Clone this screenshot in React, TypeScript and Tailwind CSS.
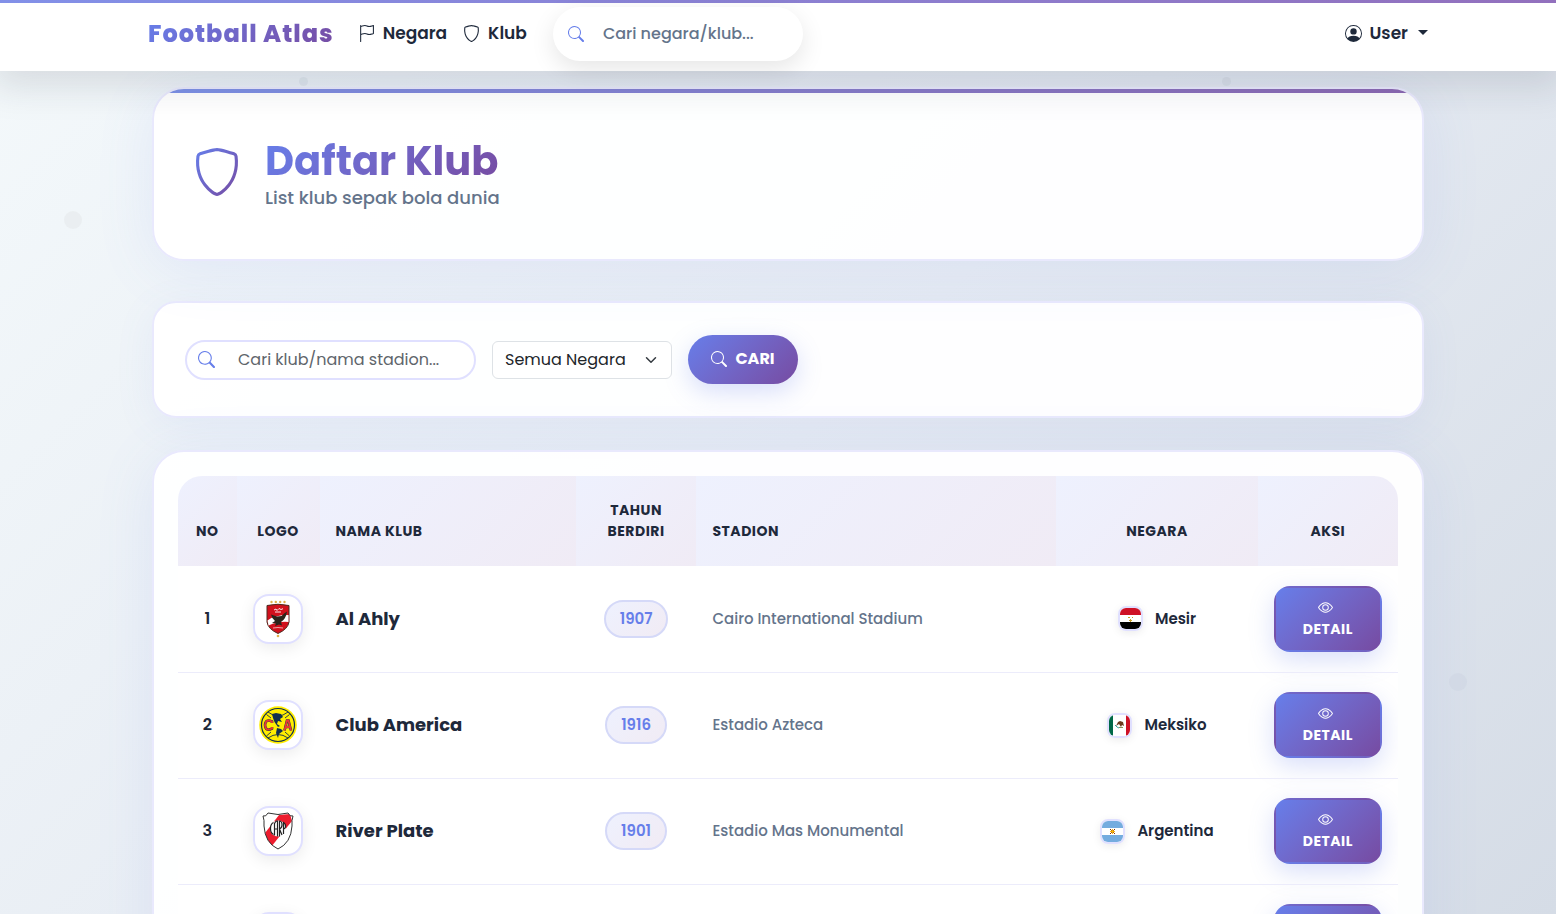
import React from "react";
import { BsEye, BsFlag, BsPersonCircle, BsSearch, BsShield } from "react-icons/bs";

type Club = {
  name: string;
  year: string;
  stadium: string;
  country: string;
  crest: React.ReactNode;
  flag: React.ReactNode;
};

function AlAhlyCrest() {
  return (
    <svg viewBox="0 0 38 38" className="size-full" aria-hidden="true">
      <g fill="#e0b04a">
        <circle cx="12.5" cy="2" r="1.2" />
        <circle cx="16.8" cy="2" r="1.2" />
        <circle cx="21.2" cy="2" r="1.2" />
        <circle cx="25.5" cy="2" r="1.2" />
        <circle cx="19" cy="36" r="1.3" />
      </g>
      <path d="M8 5.5 Q19 3 30 5.5 V22 Q29 29 19 33.5 Q9 29 8 22 Z" fill="#d1101c" stroke="#4b2b20" strokeWidth="1" />
      <path d="M8.5 20.5 Q15 15 29.5 15 V22 Q20 21 9.5 25.5 Z" fill="#fff" />
      <path d="M15 10 l2-1 1 1.5 2-2 2 1 2-.8 M16 12 h6" fill="none" stroke="#fff" strokeWidth=".9" />
      <path d="M28 11.5 Q25 13 22.5 16 L18 16.5 L12 14.5 Q13 19 16 21 L13 23 L17 23.5 L16 26 L20 24.5 L23 25.5 L22 22 Q27 19 28 11.5 Z" fill="#2c241b" />
      <path d="M14 28 Q19 27 24 28" fill="none" stroke="#f3c8c8" strokeWidth=".8" />
    </svg>
  );
}

function AmericaCrest() {
  return (
    <svg viewBox="0 0 38 38" className="size-full" aria-hidden="true">
      <circle cx="19" cy="19" r="18.8" fill="#ffed00" />
      <circle cx="19" cy="19" r="16.5" fill="none" stroke="#12304f" strokeWidth="1.2" />
      <path d="M9 6 Q19 14 29 6 M9 32 Q19 25 29 32 M12 12 L7.5 8.5 M26 12 L30.5 8.5 M12 26 L7.5 30 M26 26 L30.5 30" fill="none" stroke="#12304f" strokeWidth=".9" />
      <path d="M13 8 L17 7 L22 8 L24 11 L21 13 L23 16 L19 15 L18 18 L21 20 L19 21 L15.5 16 L14 12 Z M18 22 L22 23 L24 25 L20 28 L19 32 L17 27 Z" fill="#12304f" />
      <path d="M13 17 V15.5 Q6.5 12.5 6 19 Q6.5 26 13 22.5 V21" fill="none" stroke="#12304f" strokeWidth="2.6" />
      <path d="M13 17 V15.5 Q6.5 12.5 6 19 Q6.5 26 13 22.5 V21" fill="none" stroke="#e63b35" strokeWidth="1.9" />
      <path d="M25.5 24.5 L28 14.5 H29.5 L32 24.5 M26.5 21 H31" fill="none" stroke="#12304f" strokeWidth="2.6" />
      <path d="M25.5 24.5 L28 14.5 H29.5 L32 24.5 M26.5 21 H31" fill="none" stroke="#e63b35" strokeWidth="1.9" />
    </svg>
  );
}

function RiverCrest() {
  return (
    <svg viewBox="0 0 38 38" className="size-full" aria-hidden="true">
      <defs>
        <clipPath id="river-shield">
          <path d="M4 4 Q7 5 9 1 Q19 4 29 1 Q31 5 34 4 Q32.5 8 33 14 Q32 31 19 37 Q6 31 5 14 Q5.5 8 4 4 Z" />
        </clipPath>
      </defs>
      <g clipPath="url(#river-shield)">
        <rect width="38" height="38" fill="#fff" />
        <path d="M20 3 L31 2 L33 9 L12 35 L9 31 L6 21 Z" fill="#ed1c2e" />
      </g>
      <path d="M4 4 Q7 5 9 1 Q19 4 29 1 Q31 5 34 4 Q32.5 8 33 14 Q32 31 19 37 Q6 31 5 14 Q5.5 8 4 4 Z" fill="none" stroke="#333" strokeWidth="1" />
      <circle cx="19" cy="16.5" r="8" fill="#fff" />
      <path d="M14.5 10.5 Q11.5 12 11.5 16.5 Q11.5 21 14.5 22.5 M15.5 23.5 V11.5 Q17 8.5 18.5 9 V24.5 M15.5 17 H18.5 M20.5 24.5 V9 Q23 9 23 13 Q23 16 20.5 17 L23 23 M24.5 22 V10.5 Q27 12 26.5 15 Q26 17 24.5 17" fill="none" stroke="#222" strokeWidth="1.2" />
    </svg>
  );
}

function EgyptFlag() {
  return (
    <svg viewBox="0 0 21 21" className="size-full" aria-hidden="true">
      <rect width="21" height="21" fill="#fff" />
      <rect width="21" height="7" fill="#ce1126" />
      <rect y="14" width="21" height="7" fill="#000" />
      <path d="M8 9h2v1h-2z M12 9h1v1h-1z M10 11h1v1h1v1h-1v1h-1v-1h-1v-1h1z" fill="#c9a227" />
    </svg>
  );
}

function MexicoFlag() {
  return (
    <svg viewBox="0 0 21 21" className="size-full" aria-hidden="true">
      <rect width="21" height="21" fill="#fff" />
      <rect width="4" height="21" fill="#006847" />
      <rect x="17" width="4" height="21" fill="#ce1126" />
      <path d="M9 7 L11 6 L14 7 L15 11 L13 10 L12 12 L10 9 L7 11 Z" fill="#6b3a1e" />
      <path d="M6 10 L8 12 L10 13" fill="none" stroke="#3aa6a0" strokeWidth="1" />
      <path d="M10 12.5 L14 12.5" stroke="#8c9157" strokeWidth="1" />
    </svg>
  );
}

function ArgentinaFlag() {
  return (
    <svg viewBox="0 0 21 21" className="size-full" aria-hidden="true">
      <rect width="21" height="21" fill="#fff" />
      <rect width="21" height="7" fill="#74acdf" />
      <rect y="14" width="21" height="7" fill="#74acdf" />
      <path d="M8 8 L13 13 M13 8 L8 13" stroke="#85340a" strokeWidth="1" />
      <path d="M10.5 8 V13 M8 10.5 H13" stroke="#f6b40e" strokeWidth="1" />
      <circle cx="10.5" cy="10.5" r="1.4" fill="#f6b40e" />
    </svg>
  );
}

const clubs: Club[] = [
  { name: "Al Ahly", year: "1907", stadium: "Cairo International Stadium", country: "Mesir", crest: <AlAhlyCrest />, flag: <EgyptFlag /> },
  { name: "Club America", year: "1916", stadium: "Estadio Azteca", country: "Meksiko", crest: <AmericaCrest />, flag: <MexicoFlag /> },
  { name: "River Plate", year: "1901", stadium: "Estadio Mas Monumental", country: "Argentina", crest: <RiverCrest />, flag: <ArgentinaFlag /> },
  { name: "", year: "", stadium: "", country: "", crest: null, flag: null },
];

const th = "bg-[linear-gradient(135deg,#eef1fe,#f0ebf5)] px-4 py-6 align-bottom text-sm leading-[21px] font-bold tracking-[0.5px] uppercase";
const card = "border-2 border-[#e9e9fd] bg-white/95";
const wideShadow = "shadow-[0_8px_60px_rgba(102,126,234,0.11)]";

function Navbar() {
  return (
    <header className="relative z-10 bg-white/98 shadow-[0_8px_36px_8px_rgba(31,41,55,0.13)]">
      <div className="h-[3px] bg-linear-to-r from-[#8290e8] to-[#9270bd]" />
      <div className="pl-5">
        <nav className="mx-auto flex h-17 max-w-[1280px] items-center pb-1.5">
          <a href="#" className="mr-6 bg-linear-135 from-[#667eea] to-[#764ba2] bg-clip-text text-2xl leading-9 font-extrabold tracking-[1px] text-transparent">
            Football Atlas
          </a>
          <a href="#negara" className="mr-4 flex items-center gap-2 text-[17px] font-semibold">
            <BsFlag className="mb-0.5 size-[17px]" />
            Negara
          </a>
          <a href="#klub" className="mr-[26px] flex items-center gap-2 text-[17px] font-semibold">
            <BsShield className="mb-0.5 size-[17px]" />
            Klub
          </a>
          <label className="flex h-[54px] w-[250px] items-center rounded-full bg-white pr-4 pl-[15px] shadow-[0_8px_24px_rgba(0,0,0,0.1)]">
            <BsSearch className="size-4 shrink-0 text-[#667eea]" />
            <input
              type="search"
              aria-label="Cari negara/klub"
              placeholder="Cari negara/klub..."
              className="ml-[19px] w-full min-w-0 text-base font-medium outline-none placeholder:text-[#64748b]"
            />
          </label>
          <button type="button" className="ml-auto flex items-center gap-2 text-[17px] font-semibold">
            <BsPersonCircle className="mb-0.5 size-[17px]" />
            User
            <span className="mb-1 ml-0.5 border-x-[5px] border-t-[5px] border-x-transparent border-t-[#1e293b]" />
          </button>
        </nav>
      </div>
    </header>
  );
}

function PageHeader() {
  return (
    <section className={`relative flex h-[174px] items-center overflow-hidden rounded-[32px] px-[39px] ${card} ${wideShadow}`}>
      <div className="absolute inset-x-0 top-0 h-1 bg-linear-to-r from-[#7d92e8] to-[#8c68b3]" />
      <svg viewBox="0 0 16 16" className="mr-6 mb-1 size-12" aria-hidden="true">
        <defs>
          <linearGradient id="shield-tone" x1="0" y1="0" x2="1" y2="1">
            <stop offset="0" stopColor="#667eea" />
            <stop offset="1" stopColor="#764ba2" />
          </linearGradient>
        </defs>
        <path
          fill="url(#shield-tone)"
          d="M5.338 1.59a61 61 0 0 0-2.837.856.48.48 0 0 0-.328.39c-.554 4.157.726 7.19 2.253 9.188a10.7 10.7 0 0 0 2.287 2.233c.346.244.652.42.893.533q.18.085.293.118a1 1 0 0 0 .101.025 1 1 0 0 0 .1-.025q.114-.034.294-.118c.24-.113.547-.29.893-.533a10.7 10.7 0 0 0 2.287-2.233c1.527-1.997 2.807-5.031 2.253-9.188a.48.48 0 0 0-.328-.39c-.651-.213-1.75-.56-2.837-.855C9.552 1.29 8.531 1.067 8 1.067c-.53 0-1.552.223-2.662.524zM5.072.56C6.157.265 7.31 0 8 0s1.843.265 2.928.56c1.11.3 2.229.655 2.887.87a1.54 1.54 0 0 1 1.044 1.262c.596 4.477-.787 7.795-2.465 9.99a11.8 11.8 0 0 1-2.517 2.453 7 7 0 0 1-1.048.625c-.28.132-.581.24-.829.24s-.548-.108-.829-.24a7 7 0 0 1-1.048-.625 11.8 11.8 0 0 1-2.517-2.453C1.928 10.487.545 7.169 1.141 2.692A1.54 1.54 0 0 1 2.185 1.43 63 63 0 0 1 5.072.56"
        />
      </svg>
      <div>
        <h1 className="w-fit bg-linear-135 from-[#667eea] to-[#764ba2] bg-clip-text text-[40px] leading-12 font-bold text-transparent">
          Daftar Klub
        </h1>
        <p className="text-lg leading-[26px] font-medium text-[#64748b]">List klub sepak bola dunia</p>
      </div>
    </section>
  );
}

function Filters() {
  return (
    <form
      onSubmit={(event) => event.preventDefault()}
      className={`mt-10 flex h-[117px] items-center gap-4 rounded-3xl px-[31px] shadow-[0_8px_40px_rgba(102,126,234,0.08)] ${card}`}
    >
      <label className="flex h-10 w-[291px] items-center rounded-[20px] border-2 border-[#e0e0ff] bg-white pr-3 pl-[11px]">
        <BsSearch className="size-[17px] shrink-0 text-[#667eea]" />
        <input
          type="search"
          aria-label="Cari klub atau nama stadion"
          placeholder="Cari klub/nama stadion..."
          className="ml-[23px] w-full min-w-0 text-base outline-none placeholder:text-[#60656b]"
        />
      </label>
      <div className="relative">
        <select aria-label="Negara" className="h-[38px] w-[180px] appearance-none rounded-md border border-[#dee2e6] bg-white pr-9 pl-3 text-base text-[#212529]">
          <option>Semua Negara</option>
          <option>Argentina</option>
          <option>Meksiko</option>
          <option>Mesir</option>
        </select>
        <svg viewBox="0 0 16 16" className="pointer-events-none absolute top-[11px] right-[15px] h-4 w-3" aria-hidden="true">
          <path d="m2 5 6 6 6-6" fill="none" stroke="#343a40" strokeWidth="2" strokeLinecap="round" strokeLinejoin="round" />
        </svg>
      </div>
      <button
        type="submit"
        className="flex h-[49px] w-[110px] items-center justify-center gap-2 rounded-full bg-linear-135 from-[#667eea] to-[#764ba2] pb-0.5 text-base font-bold text-white shadow-[0_8px_24px_rgba(102,126,234,0.25)]"
      >
        <BsSearch className="size-4" />
        CARI
      </button>
    </form>
  );
}

function ClubTable() {
  return (
    <section className={`mt-8 rounded-[32px] p-6 ${card} ${wideShadow}`}>
      <div className="overflow-hidden rounded-t-3xl bg-white">
        <table className="w-full table-fixed border-collapse text-center">
          <colgroup>
            <col className="w-[4.8%]" />
            <col className="w-[6.8%]" />
            <col className="w-[21%]" />
            <col className="w-[9.9%]" />
            <col className="w-[29.5%]" />
            <col className="w-[16.5%]" />
            <col />
          </colgroup>
          <thead>
            <tr className="h-[90px]">
              <th scope="col" className={th}>No</th>
              <th scope="col" className={th}>Logo</th>
              <th scope="col" className={`text-left ${th}`}>Nama Klub</th>
              <th scope="col" className={th}>Tahun Berdiri</th>
              <th scope="col" className={`text-left ${th}`}>Stadion</th>
              <th scope="col" className={th}>Negara</th>
              <th scope="col" className={th}>Aksi</th>
            </tr>
          </thead>
          <tbody>
            {clubs.map((club, index) => (
              <tr key={index} className="h-[106px] border-b border-[#ececfb]">
                <td className="text-base font-semibold">{index + 1}</td>
                <td>
                  <div className="mx-auto size-[50px] rounded-2xl border-2 border-[#e0e0ff] bg-white p-1 shadow-[0_4px_16px_rgba(0,0,0,0.08)]">
                    {club.crest}
                  </div>
                </td>
                <td className="px-4 text-left text-lg font-bold">{club.name}</td>
                <td>
                  {club.year && (
                    <span className="inline-block rounded-[20px] border-2 border-[#d5d9f8] bg-linear-135 from-[#eef1fe] to-[#f1ebf4] px-[14px] py-1.5 text-[15px] leading-[22px] font-semibold text-[#667eea]">
                      {club.year}
                    </span>
                  )}
                </td>
                <td className="px-4 text-left text-[15px] font-medium text-[#64748b]">{club.stadium}</td>
                <td>
                  {club.country && (
                    <div className="flex items-center justify-center gap-3 text-[15px] font-semibold">
                      <span className="size-[25px] overflow-hidden rounded-lg border-2 border-[#e0e0ff] shadow-[0_2px_8px_rgba(0,0,0,0.08)]">
                        {club.flag}
                      </span>
                      {club.country}
                    </div>
                  )}
                </td>
                <td className="px-4">
                  <button
                    type="button"
                    className="flex h-[66px] w-full flex-col items-center justify-center rounded-2xl border-2 border-transparent bg-linear-135 from-[#667eea] to-[#764ba2] text-sm leading-[21px] font-bold tracking-[0.5px] text-white shadow-[0_8px_24px_rgba(102,126,234,0.25)]"
                  >
                    <BsEye className="mt-0.5 mr-1 mb-1 size-[15px]" />
                    DETAIL
                  </button>
                </td>
              </tr>
            ))}
          </tbody>
        </table>
      </div>
    </section>
  );
}

export default function App() {
  return (
    <div className="relative h-screen overflow-hidden bg-[linear-gradient(135deg,#f4f9fb_0%,#e7ecf3_50%,#d5dce6_100%)] font-['Poppins','Inter',sans-serif] text-[#1e293b]">
      <span className="absolute top-[211px] left-[4.1%] size-[18px] rounded-full bg-[#e8ecef]/80" />
      <span className="absolute top-[673px] right-[5.7%] size-[18px] rounded-full bg-[#cfd6e2]/60" />
      <span className="absolute top-[77px] left-[19.2%] size-[9px] rounded-full bg-[#94a3b8]/12" />
      <span className="absolute top-[77px] right-[20.9%] size-[9px] rounded-full bg-[#94a3b8]/12" />
      <Navbar />
      <main className="pt-4 pl-5">
        <div className="mx-auto max-w-[1272px]">
          <PageHeader />
          <Filters />
          <ClubTable />
        </div>
      </main>
    </div>
  );
}
